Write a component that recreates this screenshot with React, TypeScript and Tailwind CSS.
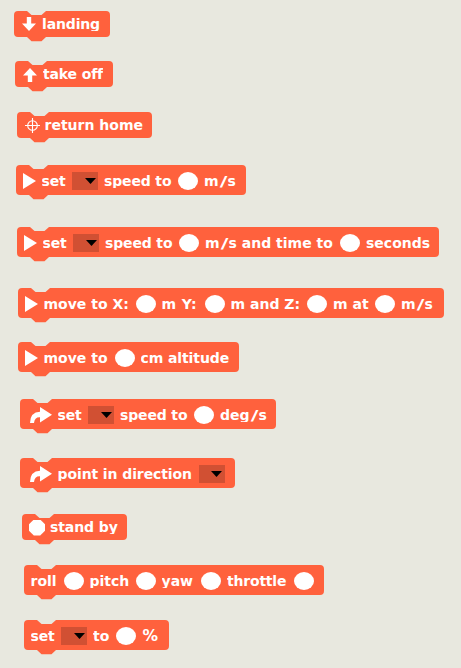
import React from 'react';

function Block({ className, width, height = 30, children }: { className: string; width: number; height?: number; children: React.ReactNode }) {
  const w = width;
  const h = height;
  return (
    <div className={`relative shrink-0 flex items-center ${className}`} style={{ width: w, height: h }}>
      <svg className="absolute left-0 top-0" width={w} height={h + 5} viewBox={`0 0 ${w} ${h + 5}`}>
        <path
          fill="#ff613d"
          d={`M0 4Q0 0 4 0H13L17.5 4H27.5L32 0H${w - 4}Q${w} 0 ${w} 4V${h - 4}Q${w} ${h} ${w - 4} ${h}H32L27.5 ${h + 4.3}H17.5L13 ${h}H4Q0 ${h} 0 ${h - 4}Z`}
        />
      </svg>
      <div className="relative flex items-center gap-1.5 whitespace-nowrap">{children}</div>
    </div>
  );
}

function T({ children, className = '' }: { children: React.ReactNode; className?: string }) {
  return (
    <span className={`block h-[15px] shrink-0 overflow-hidden leading-[17px] ${className}`}>{children}</span>
  );
}

function Slash() {
  return <span className="inline-block w-[9px] origin-center scale-x-150 text-center leading-none">/</span>;
}

function Oval() {
  return <span className="mt-px h-[18px] w-5 shrink-0 rounded-[50%] bg-white" />;
}

function Menu() {
  return (
    <span className="mt-px flex h-[18px] w-[26px] shrink-0 items-center justify-end bg-[#d15033] pr-[2.5px]">
      <svg width="11" height="6" viewBox="0 0 11 6"><path d="M0 0H11L5.5 6Z" fill="#000" /></svg>
    </span>
  );
}

function Play() {
  return <svg className="-mr-[0.5px] mt-px ml-[7px] shrink-0" width="13" height="16" viewBox="0 0 13 16"><path d="M0 0L13 8L0 16Z" fill="#fff" /></svg>;
}

function Turn() {
  return (
    <svg className="-mr-[0.5px] mt-px ml-[10px] shrink-0" width="22" height="16" viewBox="0 0 22 16">
      <path d="M10 0L22 7.7L10 15.5V10.3Q4.6 10 4 16H0Q0.2 5 10 4.7Z" fill="#fff" />
    </svg>
  );
}

function Arrow({ up = false }: { up?: boolean }) {
  return (
    <svg className={`ml-2 shrink-0 ${up ? 'mt-0.5 rotate-180' : ''}`} width="14" height="14" viewBox="0 0 14 14">
      <path d="M4.8 0H9.2V6.5H14L7 14L0 6.5H4.8Z" fill="#fff" />
    </svg>
  );
}

export default function App() {
  return (
    <main className="flex h-[668px] w-[461px] flex-col overflow-hidden bg-[#e8e8df] font-['DejaVu_Sans',sans-serif] text-[14px] font-bold text-white">
      <Block className="mt-[11px] ml-[14px]" width={96} height={26}>
        <Arrow /><T className="-mt-px h-[14px] leading-4 tracking-[-0.15px]">landing</T>
      </Block>
      <Block className="mt-6 ml-[15px]" width={98} height={26}>
        <Arrow up /><T className="-mt-px tracking-[-0.15px]">take off</T>
      </Block>
      <Block className="mt-[25px] ml-[17px]" width={135} height={26}>
        <svg className="-mr-px ml-[7.5px] shrink-0" width="15" height="15" viewBox="0 0 15 15" fill="none" stroke="#fff" strokeWidth="1.1">
          <circle cx="7.5" cy="7.5" r="4.8" /><path d="M7.5 0V15M0 7.5H15" />
        </svg>
        <T className="-mt-px">return home</T>
      </Block>
      <Block className="mt-[27px] ml-4" width={230}>
        <Play /><T className="w-[24.5px] tracking-[-0.2px]">set</T><Menu /><T className="w-[68px] tracking-[-0.15px]">speed to</T><Oval /><T>m<Slash />s</T>
      </Block>
      <Block className="mt-8 ml-[17px]" width={422}>
        <Play /><T className="w-[24.5px] tracking-[-0.2px]">set</T><Menu /><T className="w-[68px] tracking-[-0.15px]">speed to</T><Oval /><T className="w-[129px]">m<Slash />s and time to</T><Oval /><T>seconds</T>
      </Block>
      <Block className="mt-[31px] ml-[18px]" width={426}>
        <Play /><T className="w-[86px]">move to X:</T><Oval /><T className="w-[37px] tracking-[0.35px]">m Y:</T><Oval /><T className="w-[70.5px]">m and Z:</T><Oval /><T className="w-9">m at</T><Oval /><T>m<Slash />s</T>
      </Block>
      <Block className="mt-6 ml-[18px]" width={221}>
        <Play /><T className="w-[65px]">move to</T><Oval /><T className="tracking-[-0.1px]">cm altitude</T>
      </Block>
      <Block className="mt-[27px] ml-5" width={256}>
        <Turn /><T className="w-[24.5px] tracking-[-0.2px]">set</T><Menu /><T className="w-[68px] tracking-[-0.15px]">speed to</T><Oval /><T className="h-[14px] leading-4">deg<Slash />s</T>
      </Block>
      <Block className="mt-[29px] ml-5" width={215}>
        <Turn /><T className="w-[135.4px] tracking-[-0.1px]">point in direction</T><Menu />
      </Block>
      <Block className="mt-[26px] ml-[22px]" width={105} height={26}>
        <span className="mt-px -mr-px ml-[7px] size-4 bg-white [clip-path:polygon(30%_0,70%_0,100%_30%,100%_70%,70%_100%,30%_100%,0_70%,0_30%)]" />
        <T className="-mt-px tracking-[-0.1px]">stand by</T>
      </Block>
      <Block className="mt-[25px] ml-6" width={300}>
        <T className="ml-[6.5px] w-[27px]">roll</T><Oval /><T className="w-[40px]">pitch</T><Oval /><T className="w-[33.5px]">yaw</T><Oval /><T className="w-[60.5px] tracking-[-0.2px]">throttle</T><Oval />
      </Block>
      <Block className="mt-[25px] ml-6" width={145}>
        <T className="ml-[6.5px] w-[24.5px] tracking-[-0.2px]">set</T><Menu /><T className="w-[16.5px]">to</T><Oval /><span className="mt-0.5 ml-px text-[15.5px] leading-5">%</span>
      </Block>
    </main>
  );
}
